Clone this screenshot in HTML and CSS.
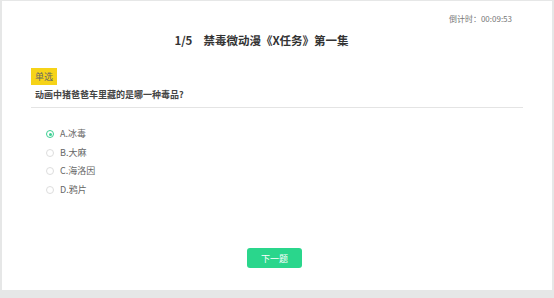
FILE: index.html
```html
<!DOCTYPE html>
<html lang="zh">
<head>
    <meta charset="UTF-8">
    <title>答题</title>
    <link rel="stylesheet" href="styles.css">
</head>
<body>
    <div class="paper">
        <div class="timer">倒计时：00:09:53</div>
        <h1 class="title"><span class="num">1/5</span>禁毒微动漫《X任务》第一集</h1>
        <div class="question">
            <span class="tag">单选</span>
            <p class="stem">动画中猪爸爸车里藏的是哪一种毒品?</p>
        </div>
        <ul class="options">
            <li class="checked"><span class="radio"></span>A.冰毒</li>
            <li><span class="radio"></span>B.大麻</li>
            <li><span class="radio"></span>C.海洛因</li>
            <li><span class="radio"></span>D.鸦片</li>
        </ul>
        <div class="actions">
            <button class="next">下一题</button>
        </div>
    </div>
</body>
</html>
```

FILE: styles.css
```css
* {
    box-sizing: border-box;
    margin: 0;
    padding: 0;
}
body {
    font-family: "Noto Sans CJK SC", "Noto Sans", sans-serif;
    background: #e6e7e7;
    color: #333;
    height: 298px;
    overflow: hidden;
    padding: 1px 2px 0 2px;
}
.paper {
    background: #fff;
    height: 289px;
    padding: 12px 29px 0 29px;
}
.timer {
    text-align: right;
    font-size: 8px;
    color: #777;
    line-height: 12px;
    margin-right: 11px;
}
.title {
    text-align: center;
    font-size: 11.5px;
    font-weight: 700;
    color: #333;
    line-height: 18px;
    margin-top: 6px;
    padding-right: 31px;
}
.title .num {
    margin-right: 11px;
}
.question {
    margin-top: 12px;
    border-bottom: 1px solid #e4e4e4;
    padding-bottom: 4px;
}
.tag {
    display: inline-block;
    background: #f6d318;
    color: #666;
    font-size: 9px;
    line-height: 17px;
    padding: 0 4px;
}
.stem {
    font-size: 9px;
    color: #444;
    font-weight: 700;
    line-height: 16px;
    margin-top: 2px;
    padding-left: 4px;
}
.options {
    list-style: none;
    margin-top: 17px;
    padding-left: 15px;
}
.options li {
    display: flex;
    align-items: center;
    font-size: 9px;
    color: #666;
    line-height: 18.5px;
}
.radio {
    width: 8px;
    height: 8px;
    border: 1px solid #ddd;
    border-radius: 50%;
    margin-right: 6px;
    position: relative;
}
.checked .radio {
    border-color: #3bcf92;
}
.checked .radio::after {
    content: "";
    position: absolute;
    left: 1.5px;
    top: 1.5px;
    width: 3px;
    height: 3px;
    border-radius: 50%;
    background: #3bcf92;
}
.actions {
    display: flex;
    justify-content: center;
    margin-top: 49px;
    padding-right: 5px;
}
.next {
    background: #2ad68c;
    color: #fff;
    border: none;
    border-radius: 3px;
    width: 55px;
    height: 20px;
    font-family: inherit;
    font-size: 9px;
}
```
